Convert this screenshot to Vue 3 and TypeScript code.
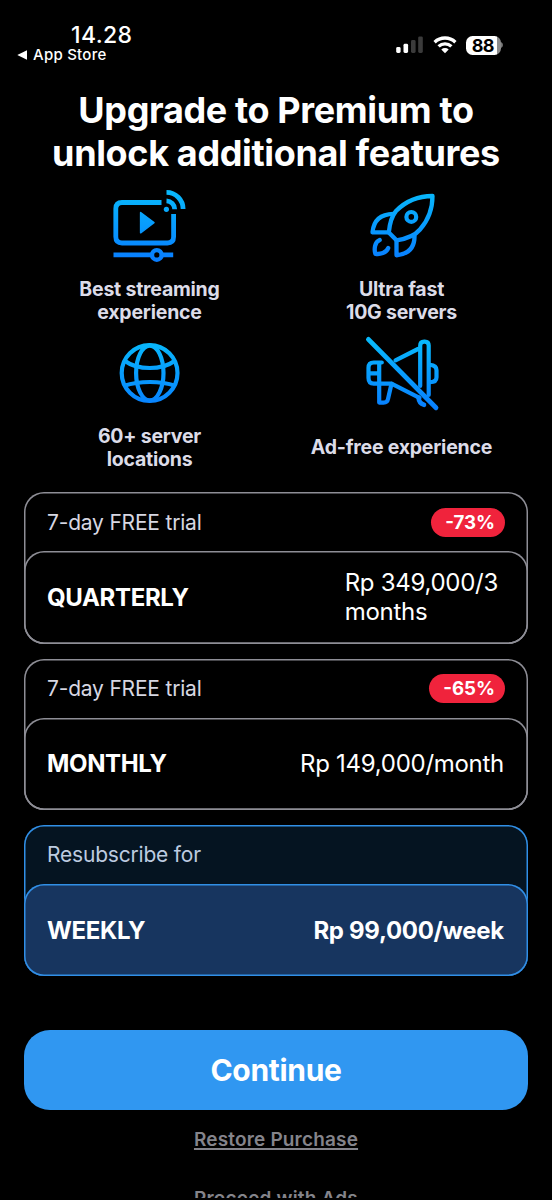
<script setup lang="ts">
import { ref } from 'vue'

interface Feature {
  icon: 'stream' | 'rocket' | 'globe' | 'adfree'
  lines: string[]
}

interface Plan {
  id: string
  note: string
  badge?: string
  name: string
  price: string[]
}

const features: Feature[] = [
  { icon: 'stream', lines: ['Best streaming', 'experience'] },
  { icon: 'rocket', lines: ['Ultra fast', '10G servers'] },
  { icon: 'globe', lines: ['60+ server', 'locations'] },
  { icon: 'adfree', lines: ['Ad-free experience'] },
]

const plans: Plan[] = [
  { id: 'quarterly', note: '7-day FREE trial', badge: '-73%', name: 'QUARTERLY', price: ['Rp 349,000/3', 'months'] },
  { id: 'monthly', note: '7-day FREE trial', badge: '-65%', name: 'MONTHLY', price: ['Rp 149,000/month'] },
  { id: 'weekly', note: 'Resubscribe for', name: 'WEEKLY', price: ['Rp 99,000/week'] },
]

const selected = ref('weekly')
</script>

<template>
  <main class="screen">
    <header class="status">
      <div class="status-left">
        <div class="time">14.28</div>
        <div class="back">
          <svg width="11" height="10" viewBox="0 0 11 10"><path d="M0.3 5 L10 0.2 V9.8 Z" fill="#fff" /></svg>
          <span>App Store</span>
        </div>
      </div>
      <div class="status-right">
        <svg width="28" height="18" viewBox="0 0 28 18">
          <rect x="0.2" y="11" width="4.4" height="6" rx="1.4" fill="#fff" />
          <rect x="7.5" y="7.8" width="4.6" height="9.2" rx="1.4" fill="#fff" />
          <rect x="15" y="4" width="4.6" height="13" rx="1.4" fill="#3b3b3b" />
          <rect x="22.2" y="0.4" width="4.6" height="16.6" rx="1.4" fill="#3b3b3b" />
        </svg>
        <svg class="wifi" width="24" height="18" viewBox="0 0 24 18" fill="none" stroke="#fff" stroke-width="3.3">
          <path d="M1.6 6.2 A15 15 0 0 1 22.4 6.2" />
          <path d="M5.6 10.4 A9.3 9.3 0 0 1 18.4 10.4" />
          <path d="M12 17.2 L8.3 13.5 A5.4 5.4 0 0 1 15.7 13.5 Z" fill="#fff" stroke="none" />
        </svg>
        <div class="battery"><span>88</span></div>
        <svg class="cap" width="3" height="6" viewBox="0 0 3 6"><path d="M0 0 Q2 1 2 3 Q2 5 0 6Z" fill="#777" /></svg>
      </div>
    </header>

    <h1 class="title"><span>Upgrade to Premium to</span><span>unlock additional features</span></h1>

    <svg class="defs" width="0" height="0" aria-hidden="true">
      <defs>
        <linearGradient id="blue" gradientUnits="userSpaceOnUse" x1="0" y1="12" x2="0" y2="82">
          <stop offset="0" stop-color="#08b8fb" />
          <stop offset="1" stop-color="#087cff" />
        </linearGradient>
      </defs>
    </svg>

    <section class="features">
      <div v-for="f in features" :key="f.icon" class="feature">
        <svg v-if="f.icon === 'stream'" width="100" height="90" viewBox="0 0 100 90" fill="none" stroke="url(#blue)" stroke-width="4.8">
          <path d="M61.5 22.5 H22 Q15.8 22.5 15.8 28.7 V56.8 Q15.8 63 22 63 H67.4 Q73.6 63 73.6 56.8 V34" />
          <path d="M40.6 32.5 L54 42.6 L40.6 52.8 Z" fill="url(#blue)" stroke-width="1.5" stroke-linejoin="round" />
          <circle cx="66.4" cy="29.3" r="2.6" fill="url(#blue)" stroke="none" />
          <path d="M66.5 20.8 A8.5 8.5 0 0 1 74.7 29.2" />
          <path d="M66.5 12.4 A16.6 16.6 0 0 1 83.1 29" />
          <path d="M13.5 74.9 H51.2 M62.3 74.9 H73.2" />
          <circle cx="56.8" cy="74.9" r="4.8" stroke-width="4.4" />
        </svg>
        <svg v-else-if="f.icon === 'rocket'" width="100" height="90" viewBox="-3 0 100 90" fill="none" stroke="url(#blue)" stroke-width="4.3" stroke-linecap="round" stroke-linejoin="round">
          <path d="M77.5 16 C61 16 49.5 22.5 41 31 C36 37 34.5 45 33.8 52.6 L41.5 60.3 C52 58.8 60 55.5 65 49.5 C73 40.5 77.5 30.5 77.5 16 Z" />
          <circle cx="56.3" cy="36.9" r="4.9" stroke-width="4.2" />
          <path d="M38.5 33.8 C25 34 18.5 41 17.5 52.3 H33.8" />
          <path d="M41.5 60.3 V75.3 C53.5 74 60 67.5 59.5 55" />
          <path d="M24.7 60 C19.5 62 19 69.5 20.4 73.8 C25 74.5 31.5 73 33.2 68" />
        </svg>
        <svg v-else-if="f.icon === 'globe'" width="100" height="90" viewBox="0 0 100 90" fill="none" stroke="url(#blue)" stroke-width="4.2">
          <circle cx="49.6" cy="43" r="27.9" />
          <ellipse cx="49.8" cy="43" rx="13.7" ry="27.4" />
          <path d="M25 31 C37.5 40.3 62 40.3 74.5 31 M24.3 55.8 C39 50.7 61 50.7 75 55.8" />
        </svg>
        <svg v-else width="100" height="90" viewBox="-3 0 100 90" fill="none" stroke="url(#blue)" stroke-width="4.2" stroke-linecap="round" stroke-linejoin="round">
          <path d="M13.4 9.4 L81 77.8" stroke-width="4.8" />
          <path d="M65.2 56 V15.5 Q65.2 11.6 69.1 11.6 H69.8 Q73.7 11.6 73.7 15.5 V65" />
          <path d="M63 19 L40.5 30.3" />
          <path d="M26.8 32.5 H18.8 Q13.5 32.5 13.5 37.8 V48 Q13.5 53.6 18.8 53.6 H36.5 L64.5 67.8 M24.2 33 V53 M13.5 43.3 H24.2" />
          <path d="M24.2 54 V72.6 H28.5 Q32.4 72.6 33 69 L36.5 53.8" />
          <path d="M75 34.8 Q81.5 35.2 81.5 40.2 V47.3 Q81.5 52.2 75 52.2" />
          <path d="M63.5 67.5 Q64 73.5 69 74.8" stroke-width="4.6" />
        </svg>
        <div class="label"><span v-for="l in f.lines" :key="l">{{ l }}</span></div>
      </div>
    </section>

    <section class="plans">
      <article v-for="p in plans" :key="p.id" class="plan" :class="{ active: selected === p.id }" @click="selected = p.id">
        <div class="plan-top">
          <span class="note">{{ p.note }}</span>
          <span v-if="p.badge" class="badge">{{ p.badge }}</span>
        </div>
        <div class="plan-body">
          <span class="name" :class="p.id">{{ p.name }}</span>
          <span class="price"><span v-for="l in p.price" :key="l">{{ l }}</span></span>
        </div>
      </article>
    </section>

    <button class="continue">Continue</button>
    <a class="link restore">Restore Purchase</a>
    <div class="proceed"><a class="link">Proceed with Ads</a></div>
  </main>
</template>

<style>
html, body { background: #000; overflow: hidden; }
</style>

<style scoped>
.screen {
  width: 552px;
  height: 1200px;
  box-sizing: border-box;
  padding: 0 24px;
  overflow: hidden;
  display: flex;
  flex-direction: column;
  background: #000;
  color: #fff;
  font-family: Inter, "Liberation Sans", sans-serif;
}
.screen > * { flex-shrink: 0; }
.defs { position: absolute; }
.status {
  height: 88.5px;
  display: flex;
  justify-content: space-between;
}
.status-left { margin-left: -7px; padding-top: 23px; }
.time { margin-left: 54px; font-size: 23px; line-height: 24px; font-weight: 500; letter-spacing: 0.4px; }
.back { display: flex; align-items: center; gap: 5px; font-size: 15px; line-height: 16px; font-weight: 500; letter-spacing: 0.25px; }
.status-right { display: flex; align-items: center; height: 20px; margin-top: 35px; margin-right: 24px; }
.wifi { margin-left: 9px; }
.battery {
  width: 34.5px;
  height: 19px;
  margin-left: 9.5px;
  border-radius: 6.5px;
  background: linear-gradient(90deg, #fff 31px, #8b8b8b 31px);
  color: #000;
  font-size: 18px;
  line-height: 19px;
  font-weight: 700;
  text-align: center;
  letter-spacing: -0.7px;
}
.battery span { margin-right: 1px; }
.cap { margin-left: 0.5px; }
.title {
  margin: 0;
  font-size: 36px;
  line-height: 43px;
  font-weight: 700;
  letter-spacing: -0.36px;
  text-align: center;
}
.title span, .label span, .price > span { display: block; white-space: nowrap; }
.features {
  display: grid;
  grid-template-columns: 1fr 1fr;
  margin-top: 5.5px;
}
.feature { display: flex; flex-direction: column; align-items: center; height: 150px; }
.feature svg { display: block; }
.feature:nth-child(n + 3) { height: 162.25px; }
.label {
  height: 46px;
  margin-top: 7.5px;
  margin-right: 1px;
  display: flex;
  flex-direction: column;
  justify-content: center;
  color: #dcdce8;
  font-size: 19.5px;
  line-height: 23px;
  font-weight: 700;
  letter-spacing: -0.22px;
  text-align: center;
}
.feature:nth-child(n + 3) .label { margin-top: 4.5px; }
.plans { display: flex; flex-direction: column; gap: 15px; }
.plan {
  height: 151.33px;
  border-radius: 20px;
  box-shadow: inset 0 0 0 1.5px #8e8e96;
  display: flex;
  flex-direction: column;
}
.plan-top {
  height: 59px;
  box-sizing: border-box;
  padding: 1px 23px 0;
  display: flex;
  align-items: center;
  justify-content: space-between;
  flex-shrink: 0;
}
.note { font-size: 21px; color: #d7d7e2; letter-spacing: -0.2px; }
.badge {
  height: 29px;
  padding: 0 10px 0 14px;
  border-radius: 15px;
  background: #f0233c;
  font-size: 18.7px;
  line-height: 29px;
  font-weight: 700;
}
.plan-body {
  flex: 1;
  padding: 0 24px 0 23px;
  border-radius: 20px;
  box-shadow: inset 0 0 0 1.5px #8e8e96;
  display: flex;
  align-items: center;
  justify-content: space-between;
}
.name { font-size: 24px; font-weight: 700; letter-spacing: -0.35px; }
.price { font-size: 24px; line-height: 29px; letter-spacing: -0.28px; }
.quarterly + .price { margin-right: 6px; }
.plan.active { box-shadow: inset 0 0 0 1.5px #318fe6; background: #051421; }
.active .plan-body { box-shadow: inset 0 0 0 1.5px #318fe6; background: #17355f; }
.active .note { color: #bdcbe0; }
.active .price { font-weight: 700; letter-spacing: -0.3px; }
.continue {
  margin-top: 53.5px;
  height: 80px;
  border: 0;
  border-radius: 26px;
  background: #3097f1;
  color: #fff;
  font: 700 30px/80px Inter, sans-serif;
  letter-spacing: -0.3px;
  padding: 0;
}
.link {
  color: #84848b;
  font-size: 19px;
  line-height: 24px;
  font-weight: 600;
  letter-spacing: 0.17px;
  text-decoration: underline;
  text-decoration-thickness: 2px;
  text-underline-offset: 2px;
}
.restore { align-self: center; margin-top: 18px; }
.proceed { height: 11px; margin-top: 35px; overflow: hidden; text-align: center; line-height: 24px; }
</style>
